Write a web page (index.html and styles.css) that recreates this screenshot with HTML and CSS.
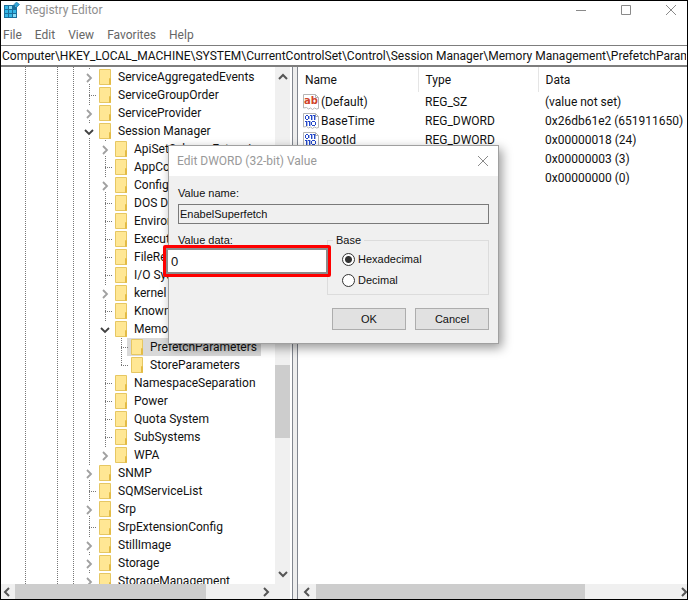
FILE: index.html
```html
<!DOCTYPE html>
<html lang="en">
<head>
    <meta charset="UTF-8">
    <meta name="viewport" content="width=device-width, initial-scale=1.0">
    <title>Registry Editor</title>
    <link rel="stylesheet" href="styles.css">
</head>
<body>
    <!-- Shared icons -->
    <svg class="sprite" width="0" height="0">
        <symbol id="folder" viewBox="0 0 16 18">
            <path d="M1.5 1.5h11v15h-11z" fill="#ffe794" stroke="#e6c763"/>
            <path d="M11.5 10.5h1v6h-1z" fill="#ffe68c" stroke="#e3bb45"/>
        </symbol>
        <symbol id="right" viewBox="0 0 16 18">
            <path d="M6 6l4 4-4 4" fill="none" stroke="#a0a0a0" stroke-width="1.8"/>
        </symbol>
        <symbol id="down" viewBox="0 0 16 18">
            <path d="M4 8l4 4 4-4" fill="none" stroke="#404040" stroke-width="1.8"/>
        </symbol>
        <symbol id="page" viewBox="0 0 16 16">
            <path d="M.5 .5h12l3 3v11l-2 .5-2-1-2 1.500-2-1.500-2 1-2-1.500-3 .5z" fill="#fff" stroke="#b5b5b5"/>
            <path d="M12.500 .5v3h3" fill="none" stroke="#b5b5b5"/>
        </symbol>
        <symbol id="string" viewBox="0 0 16 16">
            <use href="#page"/>
            <text class="icon-text" x="1" y="10">ab</text>
        </symbol>
        <symbol id="binary" viewBox="0 0 16 16">
            <use href="#page"/>
            <g fill="#2448c8" shape-rendering="crispEdges">
                <path d="M3 2h2v1H3zM3 6h2v1H3zM2 3h1v3H2zM5 3h1v3H5z"/>
                <path d="M8 2h1v5H8zM7 2h1v1H7zM11 2h1v5h-1zM10 2h1v1h-1z"/>
                <path d="M3 8h1v5H3zM2 8h1v1H2zM6 8h1v5H6zM5 8h1v1H5z"/>
                <path d="M9 8h3v1H9zM9 12h3v1H9zM8 9h1v3H8zM12 9h1v3h-1z"/>
            </g>
            <g fill="#2448c8" fill-opacity=".4" shape-rendering="crispEdges">
                <path d="M6 3h1v3H6zM9 2h1v5H9zM12 2h1v5h-1zM4 8h1v5H4zM7 8h1v5H7z"/>
            </g>
        </symbol>
    </svg>

    <div class="window">
        <header class="titlebar">
            <svg class="app-icon" width="16" height="16" viewBox="0 0 16 16">
                <path d="M0 3h11v2h2v11H0z" fill="#1a6f9c"/>
                <path d="M1 4h3v3H1zM1 8h3v3H1zM1 12h3v3H1zM5 8h3v3H5zM9 8h3v3H9zM5 12h3v3H5z" fill="#35b6e6"/>
                <path d="M5 4h3v3H5zM9 12h3v3H9z" fill="#8adcf5"/>
                <path d="M12.500 0L15.500 2.500 12.500 5.500 10 2.500z" fill="#2fa5d8" stroke="#1a6f9c" stroke-width=".6"/>
            </svg>
            <h1>Registry Editor</h1>
            <div class="window-buttons">
                <button type="button" aria-label="Minimize"><svg width="12" height="12"><path d="M1 6.500h10" stroke="#8a8a8a"/></svg></button>
                <button type="button" aria-label="Maximize"><svg width="12" height="12"><path d="M1.500 1.500h9v9h-9z" fill="none" stroke="#8a8a8a"/></svg></button>
                <button type="button" aria-label="Close"><svg width="12" height="12"><path d="M1 1l10 10M11 1L1 11" stroke="#8a8a8a"/></svg></button>
            </div>
        </header>

        <nav class="menu">
            <button type="button">File</button>
            <button type="button">Edit</button>
            <button type="button">View</button>
            <button type="button">Favorites</button>
            <button type="button">Help</button>
        </nav>

        <input class="address" type="text" aria-label="Address" value="Computer\HKEY_LOCAL_MACHINE\SYSTEM\CurrentControlSet\Control\Session Manager\Memory Management\PrefetchParameters">

        <main class="panes">
            <section class="tree-pane">
                <div class="tree-view">
                    <ul class="tree">
                        <li><div class="row"><button class="toggle" type="button" aria-label="Expand"><svg><use href="#right"/></svg></button><svg><use href="#folder"/></svg><span>ServiceAggregatedEvents</span></div></li>
                        <li><div class="row"><i class="branch"></i><svg><use href="#folder"/></svg><span>ServiceGroupOrder</span></div></li>
                        <li><div class="row"><button class="toggle" type="button" aria-label="Expand"><svg><use href="#right"/></svg></button><svg><use href="#folder"/></svg><span>ServiceProvider</span></div></li>
                        <li>
                            <div class="row"><button class="toggle" type="button" aria-label="Collapse"><svg><use href="#down"/></svg></button><svg><use href="#folder"/></svg><span>Session Manager</span></div>
                            <ul>
                                <li><div class="row"><button class="toggle" type="button" aria-label="Expand"><svg><use href="#right"/></svg></button><svg><use href="#folder"/></svg><span>ApiSetSchemaExtensions</span></div></li>
                                <li><div class="row"><i class="branch"></i><svg><use href="#folder"/></svg><span>AppCompatCache</span></div></li>
                                <li><div class="row"><button class="toggle" type="button" aria-label="Expand"><svg><use href="#right"/></svg></button><svg><use href="#folder"/></svg><span>Configuration Manager</span></div></li>
                                <li><div class="row"><i class="branch"></i><svg><use href="#folder"/></svg><span>DOS Devices</span></div></li>
                                <li><div class="row"><i class="branch"></i><svg><use href="#folder"/></svg><span>Environment</span></div></li>
                                <li><div class="row"><i class="branch"></i><svg><use href="#folder"/></svg><span>Executive</span></div></li>
                                <li><div class="row"><i class="branch"></i><svg><use href="#folder"/></svg><span>FileRenameOperations</span></div></li>
                                <li><div class="row"><i class="branch"></i><svg><use href="#folder"/></svg><span>I/O System</span></div></li>
                                <li><div class="row"><button class="toggle" type="button" aria-label="Expand"><svg><use href="#right"/></svg></button><svg><use href="#folder"/></svg><span>kernel</span></div></li>
                                <li><div class="row"><i class="branch"></i><svg><use href="#folder"/></svg><span>KnownDLLs</span></div></li>
                                <li>
                                    <div class="row"><button class="toggle" type="button" aria-label="Collapse"><svg><use href="#down"/></svg></button><svg><use href="#folder"/></svg><span>Memory Management</span></div>
                                    <ul>
                                        <li><div class="row selected"><i class="branch"></i><svg><use href="#folder"/></svg><span>PrefetchParameters</span></div></li>
                                        <li class="last"><div class="row"><i class="branch"></i><svg><use href="#folder"/></svg><span>StoreParameters</span></div></li>
                                    </ul>
                                </li>
                                <li><div class="row"><i class="branch"></i><svg><use href="#folder"/></svg><span>NamespaceSeparation</span></div></li>
                                <li><div class="row"><i class="branch"></i><svg><use href="#folder"/></svg><span>Power</span></div></li>
                                <li><div class="row"><i class="branch"></i><svg><use href="#folder"/></svg><span>Quota System</span></div></li>
                                <li><div class="row"><i class="branch"></i><svg><use href="#folder"/></svg><span>SubSystems</span></div></li>
                                <li class="last"><div class="row"><button class="toggle" type="button" aria-label="Expand"><svg><use href="#right"/></svg></button><svg><use href="#folder"/></svg><span>WPA</span></div></li>
                            </ul>
                        </li>
                        <li><div class="row"><button class="toggle" type="button" aria-label="Expand"><svg><use href="#right"/></svg></button><svg><use href="#folder"/></svg><span>SNMP</span></div></li>
                        <li><div class="row"><i class="branch"></i><svg><use href="#folder"/></svg><span>SQMServiceList</span></div></li>
                        <li><div class="row"><button class="toggle" type="button" aria-label="Expand"><svg><use href="#right"/></svg></button><svg><use href="#folder"/></svg><span>Srp</span></div></li>
                        <li><div class="row"><i class="branch"></i><svg><use href="#folder"/></svg><span>SrpExtensionConfig</span></div></li>
                        <li><div class="row"><button class="toggle" type="button" aria-label="Expand"><svg><use href="#right"/></svg></button><svg><use href="#folder"/></svg><span>StillImage</span></div></li>
                        <li><div class="row"><button class="toggle" type="button" aria-label="Expand"><svg><use href="#right"/></svg></button><svg><use href="#folder"/></svg><span>Storage</span></div></li>
                        <li><div class="row"><button class="toggle" type="button" aria-label="Expand"><svg><use href="#right"/></svg></button><svg><use href="#folder"/></svg><span>StorageManagement</span></div></li>
                    </ul>
                    <div class="scroll scroll-y">
                        <button type="button" aria-label="Scroll up"><svg width="10" height="10"><path d="M1 7l4-4 4 4" fill="none" stroke="#555" stroke-width="2"/></svg></button>
                        <div class="track"><div class="thumb"></div></div>
                        <button type="button" aria-label="Scroll down"><svg width="10" height="10"><path d="M1 3l4 4 4-4" fill="none" stroke="#555" stroke-width="2"/></svg></button>
                    </div>
                </div>
                <div class="scroll scroll-x">
                    <button type="button" aria-label="Scroll left"><svg width="10" height="10"><path d="M7 1L3 5l4 4" fill="none" stroke="#555" stroke-width="2"/></svg></button>
                    <div class="track"><div class="thumb"></div></div>
                    <button type="button" aria-label="Scroll right"><svg width="10" height="10"><path d="M3 1l4 4-4 4" fill="none" stroke="#555" stroke-width="2"/></svg></button>
                    <span class="corner"></span>
                </div>
            </section>

            <section class="value-pane">
                <div class="value-view">
                    <table>
                        <thead>
                            <tr><th class="name">Name</th><th class="type">Type</th><th>Data</th></tr>
                        </thead>
                        <tbody>
                            <tr><td><svg><use href="#string"/></svg>(Default)</td><td>REG_SZ</td><td>(value not set)</td></tr>
                            <tr><td><svg><use href="#binary"/></svg>BaseTime</td><td>REG_DWORD</td><td>0x26db61e2 (651911650)</td></tr>
                            <tr><td><svg><use href="#binary"/></svg>BootId</td><td>REG_DWORD</td><td>0x00000018 (24)</td></tr>
                            <tr><td><svg><use href="#binary"/></svg>EnablePrefetcher</td><td>REG_DWORD</td><td>0x00000003 (3)</td></tr>
                            <tr><td><svg><use href="#binary"/></svg>EnabelSuperfetch</td><td>REG_DWORD</td><td>0x00000000 (0)</td></tr>
                        </tbody>
                    </table>
                </div>
                <div class="scroll scroll-x">
                    <button type="button" aria-label="Scroll left"><svg width="10" height="10"><path d="M7 1L3 5l4 4" fill="none" stroke="#555" stroke-width="2"/></svg></button>
                    <div class="track"><div class="thumb wide"></div></div>
                    <button type="button" aria-label="Scroll right"><svg width="10" height="10"><path d="M3 1l4 4-4 4" fill="none" stroke="#555" stroke-width="2"/></svg></button>
                </div>
            </section>
        </main>

        <form class="dialog" role="dialog" aria-labelledby="dialogTitle">
            <div class="dialog-title">
                <h2 id="dialogTitle">Edit DWORD (32-bit) Value</h2>
                <button type="button" aria-label="Close dialog"><svg width="12" height="12"><path d="M1 1l10 10M11 1L1 11" stroke="#8a8a8a"/></svg></button>
            </div>
            <div class="dialog-body">
                <label for="valueName">Value name:</label>
                <input id="valueName" class="value-name" type="text" value="EnabelSuperfetch" readonly>
                <div class="columns">
                    <label for="valueData">Value data:</label>
                    <fieldset>
                        <legend>Base</legend>
                        <label><input type="radio" name="base" value="16" checked>Hexadecimal</label>
                        <label><input type="radio" name="base" value="10">Decimal</label>
                    </fieldset>
                </div>
                <div class="actions">
                    <button type="submit">OK</button>
                    <button type="button">Cancel</button>
                </div>
            </div>
            <div class="highlight">
                <input id="valueData" type="text" value="0">
            </div>
        </form>
    </div>
</body>
</html>
```
FILE: styles.css
```css
* {
    box-sizing: border-box;
}

body {
    margin: 0;
    font-family: Roboto, "Open Sans", sans-serif;
    font-size: 12px;
    color: #111;
    background-color: #fff;
}

button,
input {
    font: inherit;
    color: inherit;
}

button {
    padding: 0;
    border: none;
    background: none;
}

.sprite {
    position: absolute;
}

.icon-text {
    font-family: "DejaVu Sans", sans-serif;
    font-size: 10px;
    font-weight: bold;
    fill: #d0432b;
}

.window {
    position: relative;
    display: flex;
    flex-direction: column;
    height: 100vh;
    border: 1px solid #000;
    overflow: hidden;
}

/* Title bar and menu */
.titlebar {
    display: flex;
    align-items: center;
    height: 18px;
    padding: 0 10px 0 3px;
}

.titlebar h1 {
    flex: 1;
    margin: 0 0 0 5px;
    font-size: 12px;
    font-weight: normal;
    color: #8e8e8e;
}

.window-buttons {
    display: flex;
    gap: 33px;
}

.window-buttons svg,
.dialog-title svg,
.scroll svg {
    display: block;
}

.menu {
    display: flex;
    align-items: center;
    gap: 13px;
    height: 26px;
    padding: 6px 2px 0;
    color: #666;
}

.address {
    width: 100%;
    height: 22px;
    padding: 0 1px;
    border: solid #7d7d7d;
    border-width: 1px 0 2px;
    border-radius: 0;
    background-color: #fff;
    outline: none;
}

/* Key tree */
.panes {
    flex: 1;
    display: flex;
    gap: 4px;
    min-height: 0;
    background-color: #eee;
}

.tree-pane {
    display: flex;
    flex-direction: column;
    width: 292px;
    flex-shrink: 0;
    padding-right: 2px;
    border-right: 1px solid #828790;
    background-color: #fff;
}

.tree-view {
    flex: 1;
    display: flex;
    min-height: 0;
}

.tree {
    --dots: repeating-linear-gradient(#777 0 1px, transparent 1px 2px);
    flex: 1;
    margin: 0;
    padding: 1px 0 0 80px;
    overflow: hidden;
    list-style: none;
    background-image: var(--dots), var(--dots), var(--dots);
    background-repeat: no-repeat;
    background-size: 1px 100%;
    background-position: 24px 0, 56px 0, 72px 0;
}

.tree ul {
    margin: 0;
    padding: 0 0 0 16px;
    list-style: none;
}

.tree li {
    background: var(--dots) 8px 0 / 1px 100% no-repeat;
}

.tree li.last {
    background-size: 1px 10px;
}

.row {
    display: flex;
    align-items: center;
    height: 18px;
    white-space: nowrap;
}

.row svg {
    flex-shrink: 0;
    width: 16px;
    height: 18px;
}

.row > svg {
    margin-left: 1px;
}

.row span {
    padding: 0 4px;
    line-height: 18px;
}

.toggle {
    display: flex;
    flex-shrink: 0;
    align-items: center;
    width: 16px;
    height: 14px;
    overflow: hidden;
    background-color: #fff;
}

.branch {
    flex-shrink: 0;
    width: 16px;
    height: 1px;
    background: repeating-linear-gradient(90deg, #777 0 1px, transparent 1px 2px) 8px 0 / 8px 1px no-repeat;
}

.selected {
    width: fit-content;
    background: linear-gradient(#d9d9d9, #d9d9d9) 14px 0 no-repeat;
}

/* Scroll bars */
.scroll {
    display: flex;
    flex-shrink: 0;
    background-color: #f0f0f0;
}

.scroll button {
    display: flex;
    flex-shrink: 0;
    align-items: center;
    justify-content: center;
}

.track {
    flex: 1;
}

.thumb {
    background-color: #cdcdcd;
}

.scroll-y {
    flex-direction: column;
    width: 15px;
}

.scroll-y button {
    height: 20px;
}

.scroll-y .track {
    padding-top: 278px;
}

.scroll-y .thumb {
    height: 73px;
}

.scroll-x button {
    width: 14px;
    height: 15px;
    padding-right: 3px;
}

.scroll-x .thumb {
    width: 78%;
    height: 15px;
}

.corner {
    width: 16px;
}

/* Values */
.value-pane {
    flex: 1;
    display: flex;
    flex-direction: column;
    min-width: 0;
    border-left: 1px solid #828790;
    background-color: #fff;
}

.value-pane .scroll button {
    width: 18px;
    padding: 0;
}

.value-pane .scroll button:last-child {
    width: 8px;
}

.scroll-x .thumb.wide {
    width: 74%;
}

.value-view {
    flex: 1;
    overflow: hidden;
}

table {
    width: 100%;
    border-collapse: collapse;
    table-layout: fixed;
}

th {
    height: 25px;
    padding: 0 0 0 7px;
    border-right: 1px solid #e5e5e5;
    font-weight: normal;
    text-align: left;
}

th:last-child {
    border-right: none;
}

th.name,
th.type {
    width: 120px;
}

td {
    height: 19px;
    padding: 0 0 0 7px;
    line-height: 18px;
    white-space: nowrap;
}

td:first-child {
    padding-left: 5px;
}

td svg {
    width: 16px;
    height: 16px;
    margin-right: 2px;
    vertical-align: middle;
}

/* Edit dialog */
.dialog {
    position: absolute;
    top: 144px;
    left: 167px;
    width: 331px;
    border: 1px solid #a0a0a0;
    background-color: #f0f0f0;
    box-shadow: 3px 4px 10px rgba(0, 0, 0, 0.4);
    font-family: "Liberation Sans", Arial, sans-serif;
    font-size: 11px;
}

.dialog-title {
    display: flex;
    align-items: center;
    justify-content: space-between;
    height: 30px;
    padding: 0 9px 0 8px;
    background-color: #fff;
}

.dialog-title h2 {
    margin: 0;
    font-family: Roboto, "Open Sans", sans-serif;
    font-size: 12px;
    font-weight: normal;
    color: #999;
}

.dialog-body {
    padding: 10px 9px 13px;
}

.dialog-body label {
    display: block;
    line-height: 14px;
}

.value-name {
    display: block;
    width: 100%;
    height: 20px;
    margin-top: 4px;
    padding: 0 1px;
    border: 1px solid #7a7a7a;
    background-color: #f0f0f0;
}

.columns {
    display: flex;
    justify-content: space-between;
    margin-top: 9px;
}

fieldset {
    width: 162px;
    height: 62px;
    margin: 0;
    padding: 5px 13px 0 14px;
    border: 1px solid #dcdcdc;
}

legend {
    margin-left: -9px;
    padding: 0 3px;
    line-height: 14px;
}

.dialog-body fieldset label {
    display: flex;
    align-items: center;
    gap: 3px;
    margin-bottom: 7px;
}

input[type="radio"] {
    appearance: none;
    width: 13px;
    height: 13px;
    margin: 0;
    border: 1px solid #333;
    border-radius: 50%;
    background-color: #fff;
}

input[type="radio"]:checked {
    background-image: radial-gradient(#333 0 3px, transparent 4px);
}

.actions {
    display: flex;
    justify-content: flex-end;
    gap: 9px;
    margin-top: 13px;
}

.actions button {
    width: 74px;
    height: 22px;
    border: 1px solid #adadad;
    background-color: #e1e1e1;
}

.highlight {
    position: absolute;
    top: 99px;
    left: -6px;
    width: 168px;
    border: 3px solid #f00;
    border-radius: 2px;
}

.highlight input {
    display: block;
    width: 100%;
    height: 26px;
    padding: 0 3px;
    border: 2px solid #8c8c8c;
    background-color: #fff;
    font-size: 13px;
    outline: none;
}
```
